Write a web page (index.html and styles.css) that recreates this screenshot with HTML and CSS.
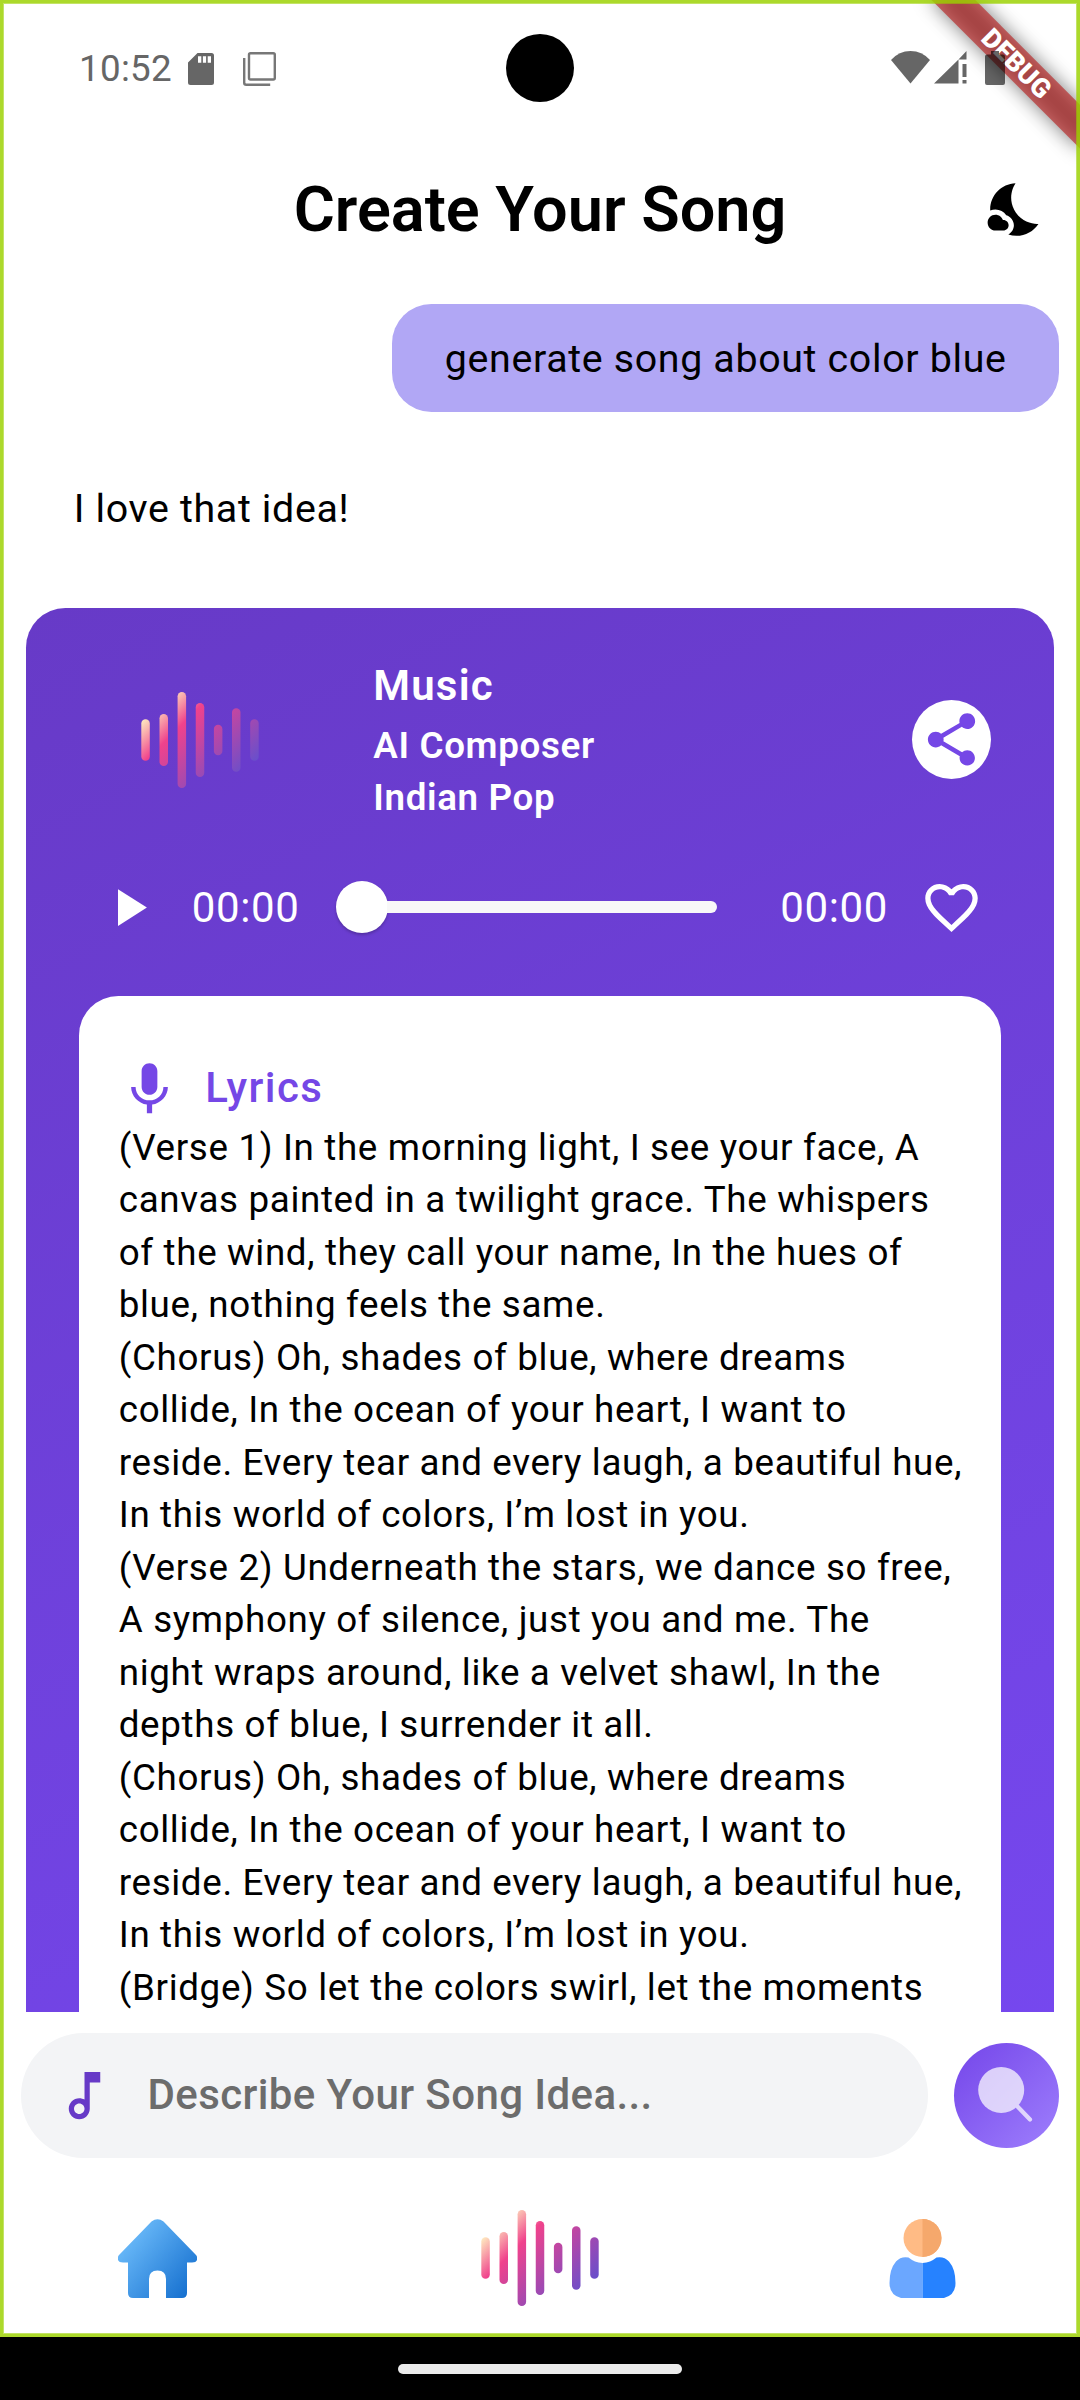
FILE: index.html
```
<!DOCTYPE html>
<html lang="en">
<head>
<meta charset="utf-8">
<title>Create Your Song</title>
<link rel="stylesheet" href="styles.css">
</head>
<body>
<svg width="0" height="0" class="defs" aria-hidden="true">
  <defs>
    <linearGradient id="sunset" gradientUnits="userSpaceOnUse" x1="-40" y1="-40" x2="40" y2="40">
      <stop offset="0" stop-color="#fff3c2"/>
      <stop offset=".29" stop-color="#f0428c"/>
      <stop offset="1" stop-color="#654fcd"/>
    </linearGradient>
    <linearGradient id="sky" x1="0" y1="0.1" x2="1" y2="0.9">
      <stop offset="0.15" stop-color="#68b8f8"/>
      <stop offset="0.95" stop-color="#1771d0"/>
    </linearGradient>
    <g id="wave" fill="url(#sunset)">
      <rect x="-58.7" y="-20.7" width="8.5" height="41.4" rx="4.25"/>
      <rect x="-40.5" y="-26" width="8.5" height="52" rx="4.25"/>
      <rect x="-22.4" y="-48" width="8.5" height="96" rx="4.25"/>
      <rect x="-4.25" y="-37" width="8.5" height="74" rx="4.25"/>
      <rect x="13.9" y="-15.2" width="8.5" height="30.4" rx="4.25"/>
      <rect x="32" y="-31.7" width="8.5" height="63.4" rx="4.25"/>
      <rect x="50.2" y="-20.7" width="8.5" height="41.4" rx="4.25"/>
    </g>
  </defs>
</svg>
<div class="phone">
  <div class="app">
    <header class="status-bar">
      <span class="clock">10:52</span>
      <svg class="sd" width="26" height="32" viewBox="0 0 26 32"><path fill-rule="evenodd" d="M9.500 0H23.500Q26 0 26 2.500V29.500Q26 32 23.500 32H2.500Q0 32 0 29.500V9.500zM10 3.300v6.400h3.300V3.300zM14.900 3.300v6.400h3.200V3.300zM19.700 3.300v6.400h3.300V3.300z"/></svg>
      <svg class="stack" width="33" height="34" viewBox="0 0 33 34"><rect x="6" y="1.200" width="25.800" height="26.300" rx="1.500"/><path d="M1.200 6v24.800q0 2 2 2h24"/></svg>
      <svg class="wifi" width="39" height="33" viewBox="0 0 39 33"><path d="M19.500 32.500L0 9Q8 0 19.500 0T39 9z"/></svg>
      <svg class="signal" width="33" height="33" viewBox="0 0 33 33"><path d="M0 32.500L24.500 8.500V32.500zM32.500 0V8.500H24.500zM28.500 13h4v13h-4zM28.500 29h4v3.500h-4z"/></svg>
      <svg class="battery" width="20" height="34" viewBox="0 0 20 34"><path d="M6 0h8v3.500h4q2 0 2 2V32q0 2-2 2H2q-2 0-2-2V5.500q0-2 2-2h4z"/></svg>
    </header>
    <div class="app-bar">
      <h1>Create Your Song</h1>
      <svg class="night" width="63" height="63" viewBox="0 0 24 24"><path d="M11.100 12.080c-2.330-4.510-.5-8.480.53-10.070C6.270 2.200 1.980 6.590 1.980 12c0 .14.020.28.020.42.620-.27 1.290-.42 2-.42 1.660 0 3.180.83 4.100 2.150C9.770 14.630 11 16.170 11 18c0 1.520-.87 2.830-2.120 3.510.98.320 2.030.5 3.110.5 3.500 0 6.580-1.800 8.370-4.520-2.360.23-6.980-.97-9.260-5.410z"/><path d="M7 16h-.18C6.400 14.840 5.300 14 4 14c-1.660 0-3 1.340-3 3s1.340 3 3 3h3c1.100 0 2-.9 2-2s-.9-2-2-2z"/></svg>
    </div>
    <main class="chat">
      <div class="message sent">generate song about color blue</div>
      <div class="message received">I love that idea!</div>
      <section class="card">
        <div class="track">
          <svg class="cover" width="120" height="100" viewBox="-60 -50 120 100"><use href="#wave"/></svg>
          <div class="meta">
            <h2>Music</h2>
            <p>AI Composer</p>
            <p>Indian Pop</p>
          </div>
          <div class="share"><svg width="63" height="63" viewBox="0 0 24 24"><path d="M18 16.080c-.76 0-1.440.3-1.960.77L8.910 12.700c.05-.23.09-.46.09-.7s-.04-.47-.09-.7l7.050-4.110c.54.5 1.250.81 2.040.81 1.660 0 3-1.340 3-3s-1.340-3-3-3-3 1.340-3 3c0 .24.040.47.09.7L8.040 9.810C7.500 9.310 6.790 9 6 9c-1.660 0-3 1.340-3 3s1.340 3 3 3c.79 0 1.500-.31 2.040-.81l7.120 4.160c-.05.21-.08.43-.08.65 0 1.610 1.310 2.920 2.920 2.920s2.920-1.310 2.920-2.920-1.310-2.920-2.920-2.920z"/></svg></div>
        </div>
        <div class="controls">
          <svg class="play" width="63" height="63" viewBox="0 0 24 24"><path d="M8 5v14l11-7z"/></svg>
          <span class="time">00:00</span>
          <div class="slider"><div class="thumb"></div><div class="rail"></div></div>
          <span class="time">00:00</span>
          <svg class="heart" width="63" height="63" viewBox="0 0 24 24"><path d="M16.500 3c-1.740 0-3.410.81-4.500 2.090C10.910 3.810 9.240 3 7.500 3 4.420 3 2 5.420 2 8.500c0 3.780 3.400 6.860 8.550 11.540L12 21.350l1.450-1.320C18.600 15.360 22 12.280 22 8.500 22 5.420 19.580 3 16.500 3zm-4.400 15.550l-.1.100-.1-.1C7.140 14.240 4 11.390 4 8.500 4 6.500 5.500 5 7.500 5c1.540 0 3.040.99 3.570 2.360h1.870C13.460 5.990 14.960 5 16.500 5c2 0 3.500 1.500 3.500 3.500 0 2.890-3.140 5.740-7.900 10.050z"/></svg>
        </div>
        <div class="lyrics">
          <div class="lyrics-head">
            <svg width="63" height="63" viewBox="0 0 24 24"><path d="M12 14c1.660 0 2.990-1.340 2.990-3L15 5c0-1.660-1.340-3-3-3S9 3.340 9 5v6c0 1.660 1.340 3 3 3zm5.300-3c0 3-2.540 5.100-5.300 5.100S6.700 14 6.700 11H5c0 3.410 2.720 6.230 6 6.720V21h2v-3.280c3.280-.48 6-3.300 6-6.720h-1.700z"/></svg>
            <h3>Lyrics</h3>
          </div>
          <p>(Verse 1) In the morning light, I see your face, A<br>canvas painted in a twilight grace. The whispers<br>of the wind, they call your name, In the hues of<br>blue, nothing feels the same.</p>
          <p>(Chorus) Oh, shades of blue, where dreams<br>collide, In the ocean of your heart, I want to<br>reside. Every tear and every laugh, a beautiful hue,<br>In this world of colors, I’m lost in you.</p>
          <p>(Verse 2) Underneath the stars, we dance so free,<br>A symphony of silence, just you and me. The<br>night wraps around, like a velvet shawl, In the<br>depths of blue, I surrender it all.</p>
          <p>(Chorus) Oh, shades of blue, where dreams<br>collide, In the ocean of your heart, I want to<br>reside. Every tear and every laugh, a beautiful hue,<br>In this world of colors, I’m lost in you.</p>
          <p>(Bridge) So let the colors swirl, let the moments</p>
        </div>
      </section>
    </main>
    <div class="composer">
      <div class="field">
        <svg width="63" height="63" viewBox="0 0 24 24"><path d="M12 3l.01 10.550c-.59-.34-1.270-.55-2-.55C7.790 13 6 14.790 6 17s1.790 4 4.010 4S14 19.210 14 17V7h4V3h-6zm-1.990 16c-1.100 0-2-.9-2-2s.9-2 2-2 2 .9 2 2-.9 2-2 2z"/></svg>
        <span>Describe Your Song Idea...</span>
      </div>
      <div class="search"><svg width="105" height="105" viewBox="0 0 105 105"><g opacity=".72"><circle cx="47.200" cy="47" r="23" fill="#fff"/><path d="M63.500 63.500L76 76.500" stroke="#fff" stroke-width="4.200" stroke-linecap="round"/></g></svg></div>
    </div>
    <nav class="tabs">
      <svg width="79" height="79" viewBox="0 0 79 79"><path fill="url(#sky)" d="M33.500 2.500Q39.500-2 45.500 2.500L77.500 35.500Q80 38 79 41Q78 43.500 74 43.500H69V74Q69 79 64 79H48V60Q48 51.500 39.500 51.500T31 60V79H15Q10 79 10 74V43.500H5Q1 43.500 0 41Q-1 38 1.500 35.500z"/></svg>
      <svg width="120" height="100" viewBox="-60 -50 120 100"><use href="#wave"/></svg>
      <svg width="79" height="79" viewBox="0 0 79 79"><circle cx="39.500" cy="19" r="19" fill="#ffbb85"/><path d="M39.500 0a19 19 0 0 1 0 38z" fill="#f5a86c"/><path fill="#6ba7ff" d="M39.500 44Q31.500 43.500 25.500 38.500Q18 37 13 42.500Q6.500 50 6.500 64Q6.500 76 18 79H39.500z"/><path fill="#2682ff" d="M39.500 44Q47.500 43.500 53.500 38.500Q61 37 66 42.500Q72.500 50 72.500 64Q72.500 76 61 79H39.500z"/></svg>
    </nav>
    <div class="banner"><div class="banner-shadow"></div><div class="banner-label">DEBUG</div></div>
    <div class="outline"></div>
    <div class="camera"></div>
  </div>
  <div class="system-nav"><div class="handle"></div></div>
</div>
</body>
</html>
```
FILE: styles.css
```
* { box-sizing: border-box; margin: 0; padding: 0; }
body { width: 1080px; height: 2400px; overflow: hidden; background: #000; font-family: Roboto, sans-serif; color: #000; }
svg { display: block; flex: none; }
.defs { position: absolute; }
.phone { display: flex; flex-direction: column; width: 1080px; height: 2400px; }
.app { position: relative; display: flex; flex-direction: column; flex: none; height: 2337px; background: #fff; overflow: hidden; }

.status-bar { position: relative; z-index: 2; display: flex; align-items: center; flex: none; height: 136px; padding: 0 75px 0 79px; fill: rgba(0, 0, 0, .6); }
.clock { width: 109px; font-size: 36.75px; line-height: 44px; letter-spacing: .3px; color: #666; padding-top: 1px; }
.sd { margin-top: 2px; }
.stack { margin-left: 29px; margin-top: 2px; fill: none; stroke: #777; stroke-width: 2.4; }
.wifi { margin-left: auto; margin-top: -2px; }
.signal { margin: -2px 0 0 3.500px; }
.battery { margin-left: 18.500px; }
.camera { position: absolute; left: 506px; top: 34px; width: 68px; height: 68px; border-radius: 50%; background: #000; }

.app-bar { display: flex; flex: none; align-items: center; justify-content: flex-end; height: 147px; padding: 0 32px 0 95px; }
.app-bar h1 { flex: 1; text-align: center; font-size: 63px; line-height: 74px; font-weight: 600; white-space: nowrap; }

.chat { display: flex; flex-direction: column; height: 1729px; flex: none; padding: 21px 21px 0 26.250px; overflow: hidden; }
.message { flex: none; height: 107.6px; line-height: 109.6px; font-size: 39.375px; letter-spacing: .656px; white-space: nowrap; }
.sent { align-self: flex-end; width: 667.3px; padding-left: 53px; border-radius: 39.4px; background: #b1a7f5; }
.received { margin: 42.800px 0 46.300px; padding-left: 47.500px; }

.card { flex: none; width: 1027.500px; height: 2200px; padding: 52.500px 52.500px 0; border-radius: 39.400px; background: linear-gradient(155deg, #673ac7, #7c4dff); color: #fff; }
.track { display: flex; align-items: center; height: 157.500px; }
.cover { margin-left: 61px; }
.meta { margin-left: 113.500px; padding-top: 2px; flex: 1; letter-spacing: .656px; font-weight: 600; white-space: nowrap; }
.meta h2 { font-size: 42px; line-height: 60px; margin-bottom: 3.600px; font-weight: 600; letter-spacing: 1.200px; }
.meta p { font-size: 36.750px; line-height: 52.500px; }
.share { display: flex; align-items: center; justify-content: center; width: 79px; height: 79px; margin-right: 10px; border-radius: 50%; background: #fff; fill: #7547e6; }
.controls { display: flex; align-items: center; height: 177.900px; padding: 0 0 0 18.500px; fill: #fff; }
.time { width: 110px; margin-left: 31.500px; font-size: 42px; letter-spacing: .656px; white-space: nowrap; }
.slider { display: flex; align-items: center; width: 381.500px; margin-left: 34px; margin-right: 31.500px; }
.thumb { flex: none; width: 52.500px; height: 52.500px; border-radius: 50%; background: #fff; box-shadow: 0 2px 3px rgba(0, 0, 0, .22); }
.rail { flex: 1; height: 11.500px; background: #f8f8f8; border-radius: 0 6px 6px 0; margin-left: -1px; }
.heart { margin-left: 29.500px; }

.lyrics { height: 1500px; padding: 60px 39.400px 0; border-radius: 39.400px; background: #fff; color: #000; }
.lyrics-head { display: flex; align-items: center; height: 65.700px; fill: #7547e6; color: #7547e6; }
.lyrics-head h3 { margin: -3px 0 0 24px; font-size: 42px; font-weight: 500; letter-spacing: 1.400px; }
.lyrics p { font-size: 36.750px; line-height: 52.500px; letter-spacing: .656px; padding-left: .6px; white-space: nowrap; }

.composer { display: flex; align-items: center; justify-content: space-between; flex: none; height: 167px; padding: 0 21px; }
.field { display: flex; align-items: center; width: 907px; height: 125.300px; padding-left: 32px; border-radius: 63px; background: #f3f4f6; fill: #673ac7; }
.field span { margin: -2px 0 0 31.500px; font-size: 42px; font-weight: 500; letter-spacing: .394px; color: #6c6c6c; white-space: nowrap; }
.search { width: 105px; height: 105px; border-radius: 50%; background: linear-gradient(135deg, #7648ea 5%, #9c7cfc 95%); }

.tabs { display: flex; align-items: center; justify-content: space-between; flex: none; height: 158px; padding: 0 118px; }

.banner { position: absolute; z-index: 1; left: 1080px; top: 0; width: 0; height: 0; transform: rotate(45deg); }
.banner-shadow, .banner-label { position: absolute; left: -105px; top: 73.500px; width: 210px; height: 31.500px; }
.banner-shadow { background: rgba(0, 0, 0, .5); filter: blur(9.500px); }
.banner-label { background: rgba(183, 28, 28, .63); color: #fff; font-size: 26.800px; line-height: 32.500px; font-weight: 900; text-align: center; }
.outline { position: absolute; z-index: 3; inset: 0; border: 3px solid rgba(155, 209, 0, .83); box-shadow: inset 0 0 0 1px rgba(155, 209, 0, .6); }

.system-nav { display: flex; justify-content: center; height: 63px; padding-top: 27px; background: #000; }
.handle { width: 284px; height: 10px; border-radius: 5px; background: #ebebeb; }
```
